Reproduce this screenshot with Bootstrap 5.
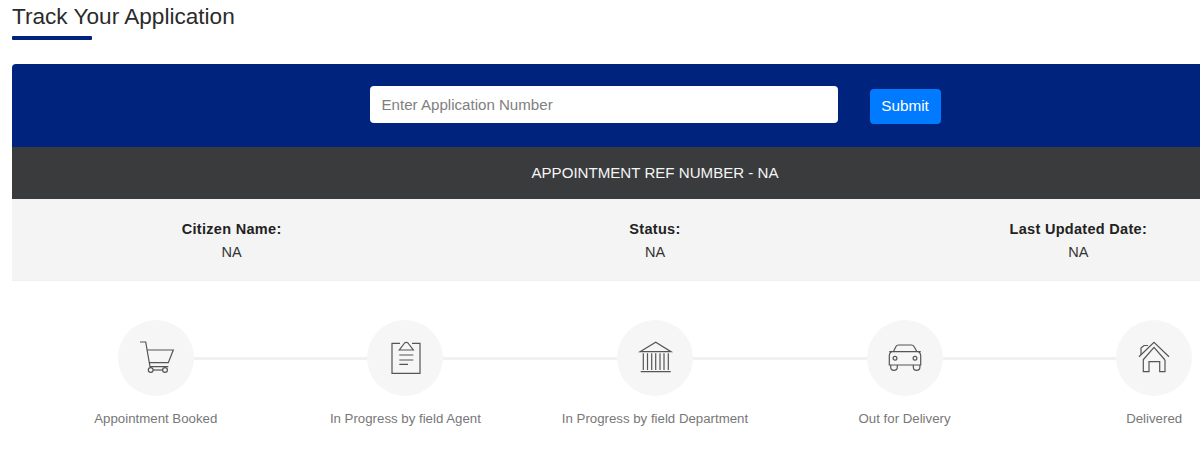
<!DOCTYPE html>
<html lang="en">
<head>
    <meta charset="UTF-8">
    <meta name="viewport" content="width=device-width, initial-scale=1.0">
    <title>Track Your Application</title>
    <link href="https://cdn.jsdelivr.net/npm/bootstrap@5.3.3/dist/css/bootstrap.min.css" rel="stylesheet" crossorigin="anonymous">
    <style>
        html, body { overflow: hidden; height: 476px; }
        body { font-family: "Liberation Sans", Arial, sans-serif; background: #fff; color: #222; }
        .page-wrap { width: 1298px; padding-left: 12px; }
        .page-title { font-size: 22.6px; line-height: 26px; font-weight: 400; color: #2b2b2b; margin: 4px 0 0; }
        .title-rule { width: 80px; height: 4px; background: #00247d; margin-top: 6px; margin-bottom: 24px; border-radius: 1px; }
        .track-box { border-radius: 4px 4px 0 0; overflow: hidden; }
        .search-band { background: #00247d; height: 83px; gap: 32px; }
        .search-input { width: 468px; height: 37px; font-size: 15.1px; padding: 0 12px; border: 0; border-radius: 4px; color: #777; margin-bottom: 2px; }
        .search-input::placeholder { color: #808080; opacity: 1; }
        .submit-btn { width: 71px; height: 35px; padding: 0; font-size: 15.3px; background: #007bff; border: 0; border-radius: 4px; margin-top: 1px; }
        .ref-band { background: #393b3d; height: 52px; color: #f5f5f5; font-size: 15.1px; }
        .info-band { background: #f4f4f4; height: 82px; padding: 2px 8px 0; font-size: 14.5px; line-height: 23px; border-bottom: 1px solid #efefef; }
        .info-band b { letter-spacing: .3px; color: #222; }
        .info-band span { color: #333; }
        .steps { padding: 39px 19px 0 19px; }
        .step-head { height: 76px; }
        .step-line { flex: 1 1 0; height: 3px; background: #f0f1f1; }
        .step-line.blank { background: transparent; }
        .step-circle { width: 76px; height: 76px; flex: none; background: #f6f6f6; }
        .step-circle svg { width: 40px; height: 40px; fill: none; stroke: #555; stroke-width: 1.2; }
        .step-label { font-size: 13.25px; color: #777; margin-top: 14px; line-height: 17px; }
    </style>
</head>
<body>
    <div class="page-wrap">
        <h1 class="page-title">Track Your Application</h1>
        <div class="title-rule"></div>

        <div class="track-box">
            <div class="search-band d-flex justify-content-center align-items-center">
                <input type="text" class="search-input" placeholder="Enter Application Number">
                <button type="button" class="btn btn-primary submit-btn">Submit</button>
            </div>
            <div class="ref-band d-flex justify-content-center align-items-center">APPOINTMENT REF NUMBER - NA</div>
            <div class="info-band row g-0 text-center align-items-center">
                <div class="col-4"><b>Citizen Name:</b><br><span>NA</span></div>
                <div class="col-4"><b>Status:</b><br><span>NA</span></div>
                <div class="col-4"><b>Last Updated Date:</b><br><span>NA</span></div>
            </div>

            <div class="steps row g-0 text-center">
                <div class="col">
                    <div class="step-head d-flex align-items-center">
                        <div class="step-line blank"></div>
                        <div class="step-circle rounded-circle d-flex justify-content-center align-items-center">
                            <svg viewBox="0 0 40 40"><path d="M4 4h5.700L14 28.700h18.300M10.700 12h26.600l-5 12.700H13"/><circle cx="14.700" cy="32" r="2.400"/><circle cx="29" cy="32" r="2.400"/><path d="M17 32h9.700"/></svg>
                        </div>
                        <div class="step-line"></div>
                    </div>
                    <div class="step-label">Appointment Booked</div>
                </div>
                <div class="col">
                    <div class="step-head d-flex align-items-center">
                        <div class="step-line"></div>
                        <div class="step-circle rounded-circle d-flex justify-content-center align-items-center">
                            <svg viewBox="0 0 40 40"><path d="M15 5.300H7v30h28v-30h-8"/><path d="M14.300 12h14l-4.500-6a2.800 2.800 0 0 0-5 0zM14.300 17h14M14.300 22h14M14.300 26.300H23"/></svg>
                        </div>
                        <div class="step-line"></div>
                    </div>
                    <div class="step-label">In Progress by field Agent</div>
                </div>
                <div class="col">
                    <div class="step-head d-flex align-items-center">
                        <div class="step-line"></div>
                        <div class="step-circle rounded-circle d-flex justify-content-center align-items-center">
                            <svg viewBox="0 0 40 40"><path d="M5 13.700L20.700 4.300 36 13.700zM5.700 33.700h30"/><path d="M8.300 15.300V32M12.500 15.300V32M16.700 15.300V32M20.700 15.300V32M25 15.300V32M29 15.300V32M33.300 15.300V32"/></svg>
                        </div>
                        <div class="step-line"></div>
                    </div>
                    <div class="step-label">In Progress by field Department</div>
                </div>
                <div class="col">
                    <div class="step-head d-flex align-items-center">
                        <div class="step-line"></div>
                        <div class="step-circle rounded-circle d-flex justify-content-center align-items-center">
                            <svg viewBox="0 0 40 40"><path d="M8.300 13.700L11 8.500c.5-1 1-1.500 2.500-1.500h13c1.500 0 2 .5 2.500 1.500l3 5.200"/><path d="M4.300 13.700h31.400M6.500 13.700c-1.500 1-2.200 2-2.200 3.500V27h31.400v-9.800c0-1.500-.7-2.500-2.200-3.500"/><path d="M5.700 27v2a3.300 3.300 0 0 0 6.600 0v-2M28.300 27v2a3.300 3.300 0 0 0 6.600 0v-2"/><circle cx="10" cy="20.300" r="1.900"/><circle cx="30" cy="20.300" r="1.900"/></svg>
                        </div>
                        <div class="step-line"></div>
                    </div>
                    <div class="step-label">Out for Delivery</div>
                </div>
                <div class="col">
                    <div class="step-head d-flex align-items-center">
                        <div class="step-line"></div>
                        <div class="step-circle rounded-circle d-flex justify-content-center align-items-center">
                            <svg viewBox="0 0 40 40"><path d="M5 18.700L20 4.300l15 14.400M9 22L20 9.300 31 22"/><path d="M9.300 22v11.700H15V23.700h10.700v10H31V22"/><path d="M7 16.500V10l3-2.500h4"/></svg>
                        </div>
                        <div class="step-line blank"></div>
                    </div>
                    <div class="step-label">Delivered</div>
                </div>
            </div>
        </div>
    </div>
    <script src="https://cdn.jsdelivr.net/npm/bootstrap@5.3.3/dist/js/bootstrap.bundle.min.js" crossorigin="anonymous"></script>
</body>
</html>
